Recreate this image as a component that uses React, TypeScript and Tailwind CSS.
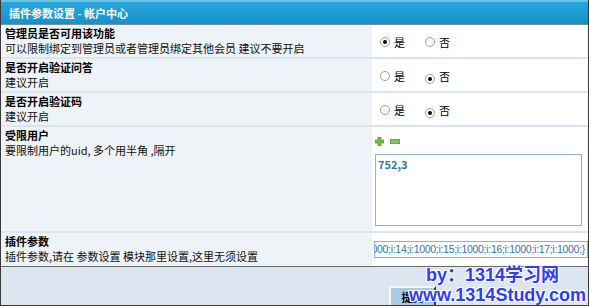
const font = { fontFamily: '"Noto Sans CJK SC", "Liberation Sans", sans-serif' };

function Radio({ on }: { on: boolean }) {
  return (
    <span className="relative inline-flex h-[10px] w-[10px] items-center justify-center rounded-full border border-[#9aa0a6] bg-white">
      {on && <span className="h-[4px] w-[4px] rounded-full bg-black" />}
    </span>
  );
}

function YesNo({ yes }: { yes: boolean }) {
  return (
    <div className="flex items-center text-[11px] text-black">
      <Radio on={yes} />
      <span className="ml-[4px]">是</span>
      <span className="ml-[20px]"><Radio on={!yes} /></span>
      <span className="ml-[4px]">否</span>
    </div>
  );
}

function Row({ title, desc, children, h = "h-[34px]" }: { title: string; desc: string; children: React.ReactNode; h?: string }) {
  return (
    <div className={`flex border-b-2 border-[#d9e6f2] ${h}`}>
      <div className="w-[371px] shrink-0 bg-[#eef3f7] pl-[4px] pt-[1px] leading-[15px]">
        <div className="text-[11px] font-bold text-black">{title}</div>
        <div className="text-[11px] text-[#111]">{desc}</div>
      </div>
      <div className="flex-1 bg-white">{children}</div>
    </div>
  );
}

export default function App() {
  return (
    <div style={font} className="relative h-[306px] w-[589px] overflow-hidden border-x border-b border-[#3a3a3a] bg-white">
      {/* header */}
      <div className="flex h-[24px] items-center border-t-2 border-[#6cc3e8] bg-gradient-to-b from-[#2aa6da] to-[#1192cc] pl-[8px] text-[11px] font-bold text-white">
        插件参数设置 - 帐户中心
      </div>
      <div className="h-[1px] bg-[#8a8a8a]" />

      <Row title="管理员是否可用该功能" desc="可以限制绑定到管理员或者管理员绑定其他会员 建议不要开启">
        <div className="flex h-full items-center pl-[8px] pt-[2px]"><YesNo yes={true} /></div>
      </Row>
      <Row title="是否开启验证问答" desc="建议开启">
        <div className="flex h-full items-center pl-[8px] pt-[2px]"><YesNo yes={false} /></div>
      </Row>
      <Row title="是否开启验证码" desc="建议开启">
        <div className="flex h-full items-center pl-[8px] pt-[2px]"><YesNo yes={false} /></div>
      </Row>
      <Row title="受限用户" desc="要限制用户的uid, 多个用半角 ,隔开" h="h-[106px]">
        <div className="pl-[3px] pt-[10px]">
          <div className="flex items-center gap-[6px]">
            <svg width="9" height="9" viewBox="0 0 9 9">
              <path d="M3 0h3v3h3v3H6v3H3V6H0V3h3z" fill="#6cbf3a" stroke="#3f8f1e" strokeWidth="0.6" />
            </svg>
            <svg width="10" height="5" viewBox="0 0 10 5">
              <rect x="0.3" y="0.3" width="9.4" height="4.4" fill="#7fcb4a" stroke="#3f8f1e" strokeWidth="0.6" />
            </svg>
          </div>
          <div className="mt-[8px] h-[72px] w-[207px] border border-[#8fb2d3] px-[2px] pt-[1px] text-[11px] font-bold text-[#2f77ad]">
            752,3
          </div>
        </div>
      </Row>
      <div className="flex h-[34px] border-b border-[#6a6a6a]">
        <div className="w-[371px] shrink-0 bg-[#eef3f7] pl-[4px] pt-[1px] leading-[15px]">
          <div className="text-[11px] font-bold text-black">插件参数</div>
          <div className="text-[11px] text-[#111]">插件参数,请在 参数设置 模块那里设置,这里无须设置</div>
        </div>
        <div className="flex-1 bg-white pl-[2px] pt-[8px]">
          <div
            className="flex h-[17px] w-[214px] items-center justify-end overflow-hidden whitespace-nowrap border border-[#8fb2d3] pr-[2px] text-[10.5px] tracking-[-0.3px] text-[#2f77ad]"
            style={{ fontFamily: '"Liberation Sans", sans-serif' }}
          >
            ;1000;i:14;i:1000;i:15;i:1000;i:16;i:1000;i:17;i:1000;&#125;
          </div>
        </div>
      </div>

      {/* footer */}
      <div className="h-[38px] bg-[#dce6f1] pl-[388px] pt-[16px]">
        <button className="h-[22px] w-[47px] border-2 border-t-[#f4f8fb] border-l-[#f4f8fb] border-b-[#2c3e50] border-r-[#2c3e50] bg-[#a9cbe6] text-[11px] font-bold text-black">
          提交
        </button>
      </div>

      {/* watermark */}
      <div
        className="pointer-events-none absolute left-[408px] top-[265px] text-[18px] font-bold leading-[20px] text-[#2f3df5]"
        style={{ fontFamily: '"Liberation Sans", "Noto Sans CJK SC", sans-serif', textShadow: "1px 1px 0 #fff, -1px -1px 0 #fff, 1px -1px 0 #fff, -1px 1px 0 #fff" }}
      >
        <div className="pl-[17px]">by：1314学习网</div>
        <div>www.1314Study.com</div>
      </div>
    </div>
  );
}
